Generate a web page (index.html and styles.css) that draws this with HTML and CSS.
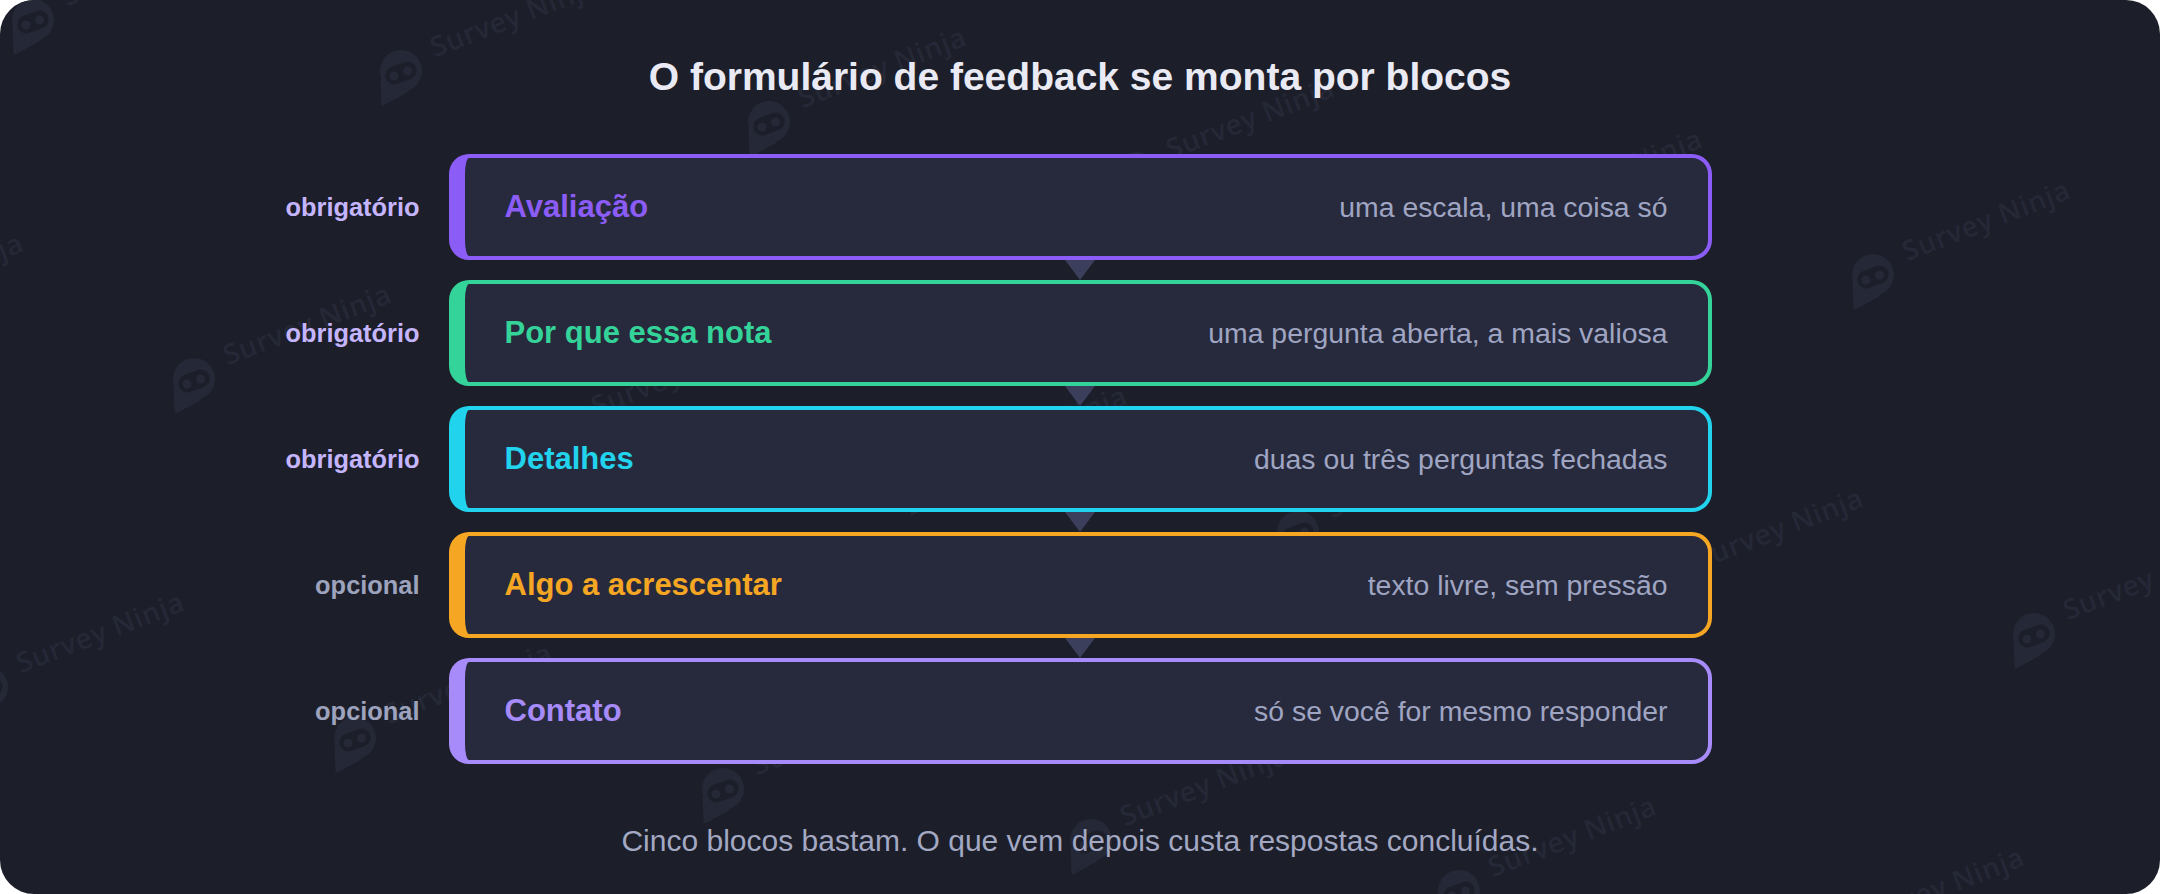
FILE: index.html
```html
<!DOCTYPE html>
<html lang="pt-BR">
<head>
<meta charset="utf-8">
<title>Blocos do formulário de feedback</title>
<link rel="stylesheet" href="styles.css">
</head>
<body>
<div class="frame">
  <div class="watermarks" aria-hidden="true">
    <div class="wm" style="left:11px;top:-1px"><svg class="wm-logo" viewBox="0 0 44 56"><circle cx="22" cy="21" r="21"/><polygon points="3,29.9 4,54 27.4,41.3"/><rect class="wm-mask" x="6" y="14" width="32" height="18" rx="9" transform="rotate(-20 22 23)"/><circle cx="15" cy="26" r="4.5"/><circle cx="28.5" cy="21" r="4.5"/></svg><span class="wm-text">Survey Ninja</span></div>
    <div class="wm" style="left:379px;top:50px"><svg class="wm-logo" viewBox="0 0 44 56"><circle cx="22" cy="21" r="21"/><polygon points="3,29.9 4,54 27.4,41.3"/><rect class="wm-mask" x="6" y="14" width="32" height="18" rx="9" transform="rotate(-20 22 23)"/><circle cx="15" cy="26" r="4.5"/><circle cx="28.5" cy="21" r="4.5"/></svg><span class="wm-text">Survey Ninja</span></div>
    <div class="wm" style="left:747px;top:101px"><svg class="wm-logo" viewBox="0 0 44 56"><circle cx="22" cy="21" r="21"/><polygon points="3,29.9 4,54 27.4,41.3"/><rect class="wm-mask" x="6" y="14" width="32" height="18" rx="9" transform="rotate(-20 22 23)"/><circle cx="15" cy="26" r="4.5"/><circle cx="28.5" cy="21" r="4.5"/></svg><span class="wm-text">Survey Ninja</span></div>
    <div class="wm" style="left:1115px;top:152px"><svg class="wm-logo" viewBox="0 0 44 56"><circle cx="22" cy="21" r="21"/><polygon points="3,29.9 4,54 27.4,41.3"/><rect class="wm-mask" x="6" y="14" width="32" height="18" rx="9" transform="rotate(-20 22 23)"/><circle cx="15" cy="26" r="4.5"/><circle cx="28.5" cy="21" r="4.5"/></svg><span class="wm-text">Survey Ninja</span></div>
    <div class="wm" style="left:1483px;top:203px"><svg class="wm-logo" viewBox="0 0 44 56"><circle cx="22" cy="21" r="21"/><polygon points="3,29.9 4,54 27.4,41.3"/><rect class="wm-mask" x="6" y="14" width="32" height="18" rx="9" transform="rotate(-20 22 23)"/><circle cx="15" cy="26" r="4.5"/><circle cx="28.5" cy="21" r="4.5"/></svg><span class="wm-text">Survey Ninja</span></div>
    <div class="wm" style="left:1851px;top:254px"><svg class="wm-logo" viewBox="0 0 44 56"><circle cx="22" cy="21" r="21"/><polygon points="3,29.9 4,54 27.4,41.3"/><rect class="wm-mask" x="6" y="14" width="32" height="18" rx="9" transform="rotate(-20 22 23)"/><circle cx="15" cy="26" r="4.5"/><circle cx="28.5" cy="21" r="4.5"/></svg><span class="wm-text">Survey Ninja</span></div>

    <div class="wm" style="left:-196px;top:307px"><svg class="wm-logo" viewBox="0 0 44 56"><circle cx="22" cy="21" r="21"/><polygon points="3,29.9 4,54 27.4,41.3"/><rect class="wm-mask" x="6" y="14" width="32" height="18" rx="9" transform="rotate(-20 22 23)"/><circle cx="15" cy="26" r="4.5"/><circle cx="28.5" cy="21" r="4.5"/></svg><span class="wm-text">Survey Ninja</span></div>
    <div class="wm" style="left:172px;top:358px"><svg class="wm-logo" viewBox="0 0 44 56"><circle cx="22" cy="21" r="21"/><polygon points="3,29.9 4,54 27.4,41.3"/><rect class="wm-mask" x="6" y="14" width="32" height="18" rx="9" transform="rotate(-20 22 23)"/><circle cx="15" cy="26" r="4.5"/><circle cx="28.5" cy="21" r="4.5"/></svg><span class="wm-text">Survey Ninja</span></div>
    <div class="wm" style="left:540px;top:409px"><svg class="wm-logo" viewBox="0 0 44 56"><circle cx="22" cy="21" r="21"/><polygon points="3,29.9 4,54 27.4,41.3"/><rect class="wm-mask" x="6" y="14" width="32" height="18" rx="9" transform="rotate(-20 22 23)"/><circle cx="15" cy="26" r="4.5"/><circle cx="28.5" cy="21" r="4.5"/></svg><span class="wm-text">Survey Ninja</span></div>
    <div class="wm" style="left:908px;top:460px"><svg class="wm-logo" viewBox="0 0 44 56"><circle cx="22" cy="21" r="21"/><polygon points="3,29.9 4,54 27.4,41.3"/><rect class="wm-mask" x="6" y="14" width="32" height="18" rx="9" transform="rotate(-20 22 23)"/><circle cx="15" cy="26" r="4.5"/><circle cx="28.5" cy="21" r="4.5"/></svg><span class="wm-text">Survey Ninja</span></div>
    <div class="wm" style="left:1276px;top:511px"><svg class="wm-logo" viewBox="0 0 44 56"><circle cx="22" cy="21" r="21"/><polygon points="3,29.9 4,54 27.4,41.3"/><rect class="wm-mask" x="6" y="14" width="32" height="18" rx="9" transform="rotate(-20 22 23)"/><circle cx="15" cy="26" r="4.5"/><circle cx="28.5" cy="21" r="4.5"/></svg><span class="wm-text">Survey Ninja</span></div>
    <div class="wm" style="left:1644px;top:562px"><svg class="wm-logo" viewBox="0 0 44 56"><circle cx="22" cy="21" r="21"/><polygon points="3,29.9 4,54 27.4,41.3"/><rect class="wm-mask" x="6" y="14" width="32" height="18" rx="9" transform="rotate(-20 22 23)"/><circle cx="15" cy="26" r="4.5"/><circle cx="28.5" cy="21" r="4.5"/></svg><span class="wm-text">Survey Ninja</span></div>
    <div class="wm" style="left:2012px;top:613px"><svg class="wm-logo" viewBox="0 0 44 56"><circle cx="22" cy="21" r="21"/><polygon points="3,29.9 4,54 27.4,41.3"/><rect class="wm-mask" x="6" y="14" width="32" height="18" rx="9" transform="rotate(-20 22 23)"/><circle cx="15" cy="26" r="4.5"/><circle cx="28.5" cy="21" r="4.5"/></svg><span class="wm-text">Survey Ninja</span></div>

    <div class="wm" style="left:-35px;top:666px"><svg class="wm-logo" viewBox="0 0 44 56"><circle cx="22" cy="21" r="21"/><polygon points="3,29.9 4,54 27.4,41.3"/><rect class="wm-mask" x="6" y="14" width="32" height="18" rx="9" transform="rotate(-20 22 23)"/><circle cx="15" cy="26" r="4.5"/><circle cx="28.5" cy="21" r="4.5"/></svg><span class="wm-text">Survey Ninja</span></div>
    <div class="wm" style="left:333px;top:717px"><svg class="wm-logo" viewBox="0 0 44 56"><circle cx="22" cy="21" r="21"/><polygon points="3,29.9 4,54 27.4,41.3"/><rect class="wm-mask" x="6" y="14" width="32" height="18" rx="9" transform="rotate(-20 22 23)"/><circle cx="15" cy="26" r="4.5"/><circle cx="28.5" cy="21" r="4.5"/></svg><span class="wm-text">Survey Ninja</span></div>
    <div class="wm" style="left:701px;top:768px"><svg class="wm-logo" viewBox="0 0 44 56"><circle cx="22" cy="21" r="21"/><polygon points="3,29.9 4,54 27.4,41.3"/><rect class="wm-mask" x="6" y="14" width="32" height="18" rx="9" transform="rotate(-20 22 23)"/><circle cx="15" cy="26" r="4.5"/><circle cx="28.5" cy="21" r="4.5"/></svg><span class="wm-text">Survey Ninja</span></div>
    <div class="wm" style="left:1069px;top:819px"><svg class="wm-logo" viewBox="0 0 44 56"><circle cx="22" cy="21" r="21"/><polygon points="3,29.9 4,54 27.4,41.3"/><rect class="wm-mask" x="6" y="14" width="32" height="18" rx="9" transform="rotate(-20 22 23)"/><circle cx="15" cy="26" r="4.5"/><circle cx="28.5" cy="21" r="4.5"/></svg><span class="wm-text">Survey Ninja</span></div>
    <div class="wm" style="left:1437px;top:870px"><svg class="wm-logo" viewBox="0 0 44 56"><circle cx="22" cy="21" r="21"/><polygon points="3,29.9 4,54 27.4,41.3"/><rect class="wm-mask" x="6" y="14" width="32" height="18" rx="9" transform="rotate(-20 22 23)"/><circle cx="15" cy="26" r="4.5"/><circle cx="28.5" cy="21" r="4.5"/></svg><span class="wm-text">Survey Ninja</span></div>
    <div class="wm" style="left:1805px;top:921px"><svg class="wm-logo" viewBox="0 0 44 56"><circle cx="22" cy="21" r="21"/><polygon points="3,29.9 4,54 27.4,41.3"/><rect class="wm-mask" x="6" y="14" width="32" height="18" rx="9" transform="rotate(-20 22 23)"/><circle cx="15" cy="26" r="4.5"/><circle cx="28.5" cy="21" r="4.5"/></svg><span class="wm-text">Survey Ninja</span></div>
  </div>

  <main class="content">
    <h1 class="title">O formulário de feedback se monta por blocos</h1>

    <div class="flow">
      <div class="row">
        <span class="tag tag-req">obrigatório</span>
        <div class="block block-purple">
          <span class="block-name">Avaliação</span>
          <span class="block-desc">uma escala, uma coisa só</span>
        </div>
      </div>
      <div class="row">
        <span class="tag tag-req">obrigatório</span>
        <div class="block block-green">
          <span class="block-name">Por que essa nota</span>
          <span class="block-desc">uma pergunta aberta, a mais valiosa</span>
        </div>
      </div>
      <div class="row">
        <span class="tag tag-req">obrigatório</span>
        <div class="block block-cyan">
          <span class="block-name">Detalhes</span>
          <span class="block-desc">duas ou três perguntas fechadas</span>
        </div>
      </div>
      <div class="row">
        <span class="tag tag-opt">opcional</span>
        <div class="block block-orange">
          <span class="block-name">Algo a acrescentar</span>
          <span class="block-desc">texto livre, sem pressão</span>
        </div>
      </div>
      <div class="row">
        <span class="tag tag-opt">opcional</span>
        <div class="block block-lilac">
          <span class="block-name">Contato</span>
          <span class="block-desc">só se você for mesmo responder</span>
        </div>
      </div>
    </div>

    <p class="note">Cinco blocos bastam. O que vem depois custa respostas concluídas.</p>
  </main>
</div>
</body>
</html>
```

FILE: styles.css
```css
* {
  box-sizing: border-box;
}

html,
body {
  margin: 0;
  padding: 0;
  background: #ffffff;
}

body {
  font-family: "Liberation Sans", Arial, "Helvetica Neue", sans-serif;
}

.frame {
  position: relative;
  width: 2160px;
  height: 894px;
  border-radius: 34px;
  background: #1c1e29;
  overflow: hidden;
}

/* background watermark pattern */
.watermarks {
  position: absolute;
  inset: 0;
  z-index: 0;
  pointer-events: none;
}

.wm {
  position: absolute;
  width: 44px;
  height: 56px;
}

.wm-logo {
  display: block;
  width: 44px;
  height: 56px;
  fill: #252836;
}

.wm-logo polygon {
  stroke: #252836;
  stroke-width: 3;
  stroke-linejoin: round;
}

.wm-logo .wm-mask {
  fill: #1c1e29;
}

.wm-text {
  position: absolute;
  left: 58px;
  top: -21px;
  height: 34px;
  line-height: 34px;
  white-space: nowrap;
  font-family: "Open Sans", "Liberation Sans", sans-serif;
  font-weight: 600;
  font-size: 28px;
  letter-spacing: 0.6px;
  color: #252836;
  transform-origin: 0 100%;
  transform: rotate(-21deg);
}

/* content */
.content {
  position: relative;
  z-index: 1;
  padding-top: 55px;
}

.title {
  margin: 0 0 55px;
  text-align: center;
  font-size: 39px;
  line-height: 44px;
  font-weight: 700;
  color: #e9eaf4;
}

.flow {
  display: flex;
  flex-direction: column;
  gap: 20px;
}

.row {
  display: grid;
  grid-template-columns: 1fr 1263px 1fr;
  column-gap: 29px;
  align-items: center;
}

.tag {
  justify-self: end;
  font-size: 25.4px;
  font-weight: 700;
}

.tag-req {
  color: #c4b5fd;
}

.tag-opt {
  color: #9da2bd;
}

.block {
  --c: #8b5cf6;
  position: relative;
  height: 106px;
  display: flex;
  align-items: center;
  justify-content: space-between;
  padding: 0 40px;
  background: #272a3c;
  border: 4px solid var(--c);
  border-left-width: 16px;
  border-radius: 20px;
}

.row:not(:last-child) .block::after {
  content: "";
  position: absolute;
  top: calc(100% + 4px);
  left: calc(50% - 6px);
  transform: translateX(-50%);
  width: 0;
  height: 0;
  border-left: 15px solid transparent;
  border-right: 15px solid transparent;
  border-top: 20px solid #3b3f5b;
}

.block-purple { --c: #8b5cf6; }
.block-green  { --c: #34d399; }
.block-cyan   { --c: #22d3ee; }
.block-orange { --c: #f5a623; }
.block-lilac  { --c: #a78bfa; }

.block-name {
  font-size: 31px;
  font-weight: 700;
  color: var(--c);
}

.block-desc {
  font-size: 28.4px;
  color: #9fa5c2;
}

.note {
  margin: 60px 0 0;
  text-align: center;
  font-size: 30px;
  line-height: 34px;
  color: #a3a8c3;
}
```
